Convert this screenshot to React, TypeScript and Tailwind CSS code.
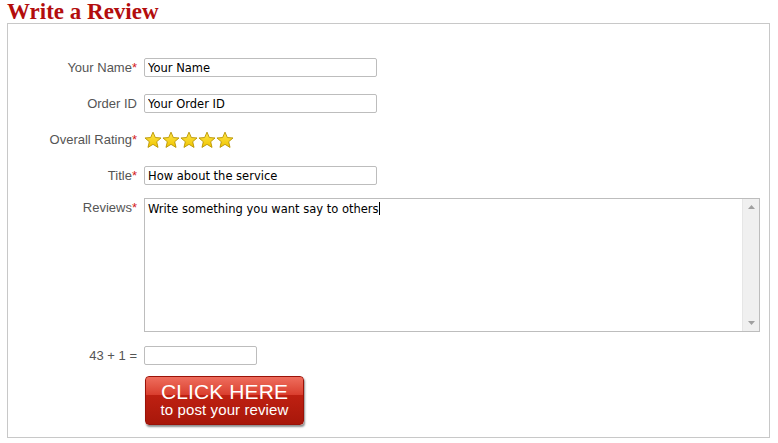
const Star = () => (
    <svg width="18" height="18" viewBox="0 0 24 24">
        <defs>
            <linearGradient id="sg" x1="0" y1="0" x2="0" y2="1">
                <stop offset="0%" stopColor="#ffe74a" />
                <stop offset="100%" stopColor="#f0c400" />
            </linearGradient>
        </defs>
        <path
            d="M12 1.5l3.1 7.2 7.6.6-5.8 5 1.8 7.6L12 17.8l-6.7 4.1 1.8-7.6-5.8-5 7.6-.6z"
            fill="url(#sg)"
            stroke="#b89400"
            strokeWidth="1.2"
            strokeLinejoin="round"
        />
    </svg>
);

const Label = ({ text, req }: { text: string; req?: boolean }) => (
    <div className="w-[136px] shrink-0 text-right text-[13px] text-[#555] pr-[7px]">
        {text}
        {req && <span className="text-[#d42020]">*</span>}
    </div>
);

const inputCls =
    "h-[19px] border border-[#bdbdbd] rounded-[2px] bg-white px-[3px] text-[11.5px] text-black font-['DejaVu_Sans',sans-serif] leading-[17px] outline-none";

export default function App() {
    return (
        <div className="w-[778px] h-[443px] bg-white font-['Liberation_Sans',Arial,sans-serif] pl-[7px]">
            {/* Heading */}
            <h2 className="font-['Liberation_Serif',serif] font-bold text-[23px] leading-[23px] text-[#b30d0d]">
                Write a Review
            </h2>

            {/* Form box */}
            <div className="w-[763px] h-[415px] border border-[#c8c8c8] pt-[34px]">
                <div className="flex items-center h-[19px]">
                    <Label text="Your Name" req />
                    <input className={`${inputCls} w-[233px]`} defaultValue="Your Name" />
                </div>

                <div className="flex items-center h-[19px] mt-[17px]">
                    <Label text="Order ID" />
                    <input className={`${inputCls} w-[233px]`} defaultValue="Your Order ID" />
                </div>

                <div className="flex items-center h-[20px] mt-[17px]">
                    <Label text="Overall Rating" req />
                    <div className="flex">
                        {[0, 1, 2, 3, 4].map((i) => (
                            <Star key={i} />
                        ))}
                    </div>
                </div>

                <div className="flex items-center h-[19px] mt-[16px]">
                    <Label text="Title" req />
                    <input className={`${inputCls} w-[233px]`} defaultValue="How about the service" />
                </div>

                <div className="flex mt-[13px]">
                    <div className="pt-[0px]">
                        <Label text="Reviews" req />
                    </div>
                    <div className="flex w-[616px] h-[134px] border border-[#bdbdbd] bg-white">
                        <div className="flex-1 px-[3px] pt-[3px] text-[11.5px] leading-[14px] text-black font-['DejaVu_Sans',sans-serif]">
                            Write something you want say to others
                            <span className="inline-block w-px h-[13px] bg-black align-[-2px]" />
                        </div>
                        {/* Scrollbar */}
                        <div className="w-[17px] bg-[#f0f0f0] border-l border-[#e6e6e6] flex flex-col justify-between items-center py-[6px]">
                            <svg width="7" height="4" viewBox="0 0 7 4">
                                <path d="M0 4L3.5 0 7 4z" fill="#a0a0a0" />
                            </svg>
                            <svg width="7" height="4" viewBox="0 0 7 4">
                                <path d="M0 0h7L3.5 4z" fill="#a0a0a0" />
                            </svg>
                        </div>
                    </div>
                </div>

                <div className="flex items-center h-[19px] mt-[14px]">
                    <Label text="43 + 1 =" />
                    <input className={`${inputCls} w-[113px]`} defaultValue="" />
                </div>

                <div className="pl-[137px] mt-[11px]">
                    <button className="relative w-[159px] h-[49px] rounded-[4px] overflow-hidden bg-gradient-to-b from-[#cc2616] to-[#a8170a] shadow-[1px_2px_2px_rgba(0,0,0,0.45)] border border-[#9a1208] text-white text-center">
                        <span className="absolute left-0 top-0 w-full h-[18px] bg-gradient-to-b from-[#f27565] to-[#dc4030] opacity-90" />
                        <span className="relative block text-[21px] leading-[20px] -mt-[1px] tracking-[0.1px]">CLICK HERE</span>
                        <span className="relative block text-[15px] leading-[16px] tracking-[0.1px]">to post your review</span>
                    </button>
                </div>
            </div>
        </div>
    );
}
